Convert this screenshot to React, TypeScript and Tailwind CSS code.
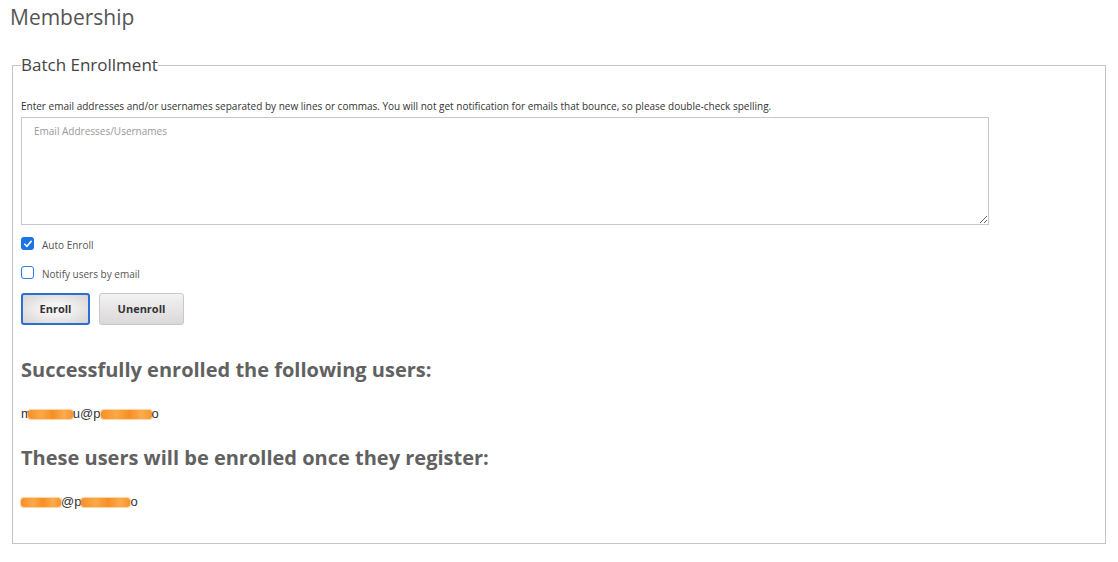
import { useState } from 'react'

// orange marker strokes that hide parts of the addresses
function Redacted({ w, className = '' }: { w: number; className?: string }) {
  return (
    <span
      className={`inline-block align-[-1px] h-[9px] rounded-[3px] bg-[linear-gradient(90deg,#f7902a,#fba848_30%,#f68f24_55%,#fbab4f_80%,#f7932c)] [box-shadow:0_0_1px_1px_rgba(247,152,42,0.45)] ${className}`}
      style={{ width: w }}
    />
  )
}

function Box({ checked, onClick }: { checked: boolean; onClick: () => void }) {
  return (
    <button
      type="button"
      onClick={onClick}
      className={`w-[13px] h-[13px] rounded-[3px] flex items-center justify-center shrink-0 ${
        checked ? 'bg-[#1b74e8]' : 'bg-white border-[1.5px] border-[#2f7ae5]'
      }`}
    >
      {checked && (
        <svg viewBox="0 0 12 12" className="w-[10px] h-[10px]">
          <path d="M2.2 6.3 L4.8 8.8 L9.8 2.8" fill="none" stroke="white" strokeWidth="2" strokeLinecap="round" strokeLinejoin="round" />
        </svg>
      )}
    </button>
  )
}

export default function App() {
  const [autoEnroll, setAutoEnroll] = useState(true)
  const [notify, setNotify] = useState(false)

  return (
    <div className="min-h-[562px] bg-white px-[10px] pt-[4px] font-['Open_Sans',sans-serif] text-[#555]">
      <h1 className="text-[21px] leading-[27px] font-normal text-[#555]">Membership</h1>

      <fieldset className="mx-[2px] mt-[23px] border border-[#c4c4c4] px-[8px] pb-[33px]">
        <legend className="text-[17px] leading-[22px] text-[#444] p-0">Batch Enrollment</legend>

        <p className="mt-[24px] text-[10px] leading-[12px] text-[#333]">
          Enter email addresses and/or usernames separated by new lines or commas. You will not get notification for emails that bounce, so please double-check spelling.
        </p>
        <textarea
          placeholder="Email Addresses/Usernames"
          className="block mt-[5px] w-[968px] h-[108px] border border-[#c8c8c8] px-[12px] pt-[6px] text-[10px] leading-[14px] text-[#333] placeholder-[#999] outline-none"
        />

        <label className="mt-[12px] flex items-center gap-[8px] h-[13px] text-[10px] text-[#555]">
          <Box checked={autoEnroll} onClick={() => setAutoEnroll(!autoEnroll)} />
          <span className="mt-[3px]">Auto Enroll</span>
        </label>
        <label className="mt-[16px] flex items-center gap-[8px] h-[13px] text-[10px] text-[#555]">
          <Box checked={notify} onClick={() => setNotify(!notify)} />
          <span className="mt-[3px]">Notify users by email</span>
        </label>

        <div className="mt-[14px] flex gap-[9px]">
          <button
            type="button"
            className="w-[69px] h-[32px] rounded-[3px] border-2 border-[#2a6fd1] bg-[radial-gradient(ellipse_at_center,#f4f2f2_30%,#d6d2d2_100%)] text-[11px] font-bold text-[#333]"
          >
            Enroll
          </button>
          <button
            type="button"
            className="w-[85px] h-[32px] rounded-[3px] border border-[#c8c8c8] bg-[linear-gradient(#f3f2f2,#dad8d8)] text-[11px] font-bold text-[#333]"
          >
            Unenroll
          </button>
        </div>

        <h2 className="mt-[33px] text-[20px] leading-[24px] font-bold text-[#616161]">
          Successfully enrolled the following users:
        </h2>
        <p className="mt-[24px] text-[13px] leading-[16px] text-[#333] font-['Liberation_Sans',sans-serif] whitespace-nowrap">
          m<Redacted w={45} className="-ml-[4px]" />
          u@p
          <Redacted w={51} />
          o
        </p>

        <h2 className="mt-[24px] text-[20px] leading-[24px] font-bold text-[#616161]">
          These users will be enrolled once they register:
        </h2>
        <p className="mt-[24px] text-[13px] leading-[16px] text-[#333] font-['Liberation_Sans',sans-serif] whitespace-nowrap">
          <Redacted w={40} />
          @p
          <Redacted w={49} />
          o
        </p>
      </fieldset>
    </div>
  )
}
